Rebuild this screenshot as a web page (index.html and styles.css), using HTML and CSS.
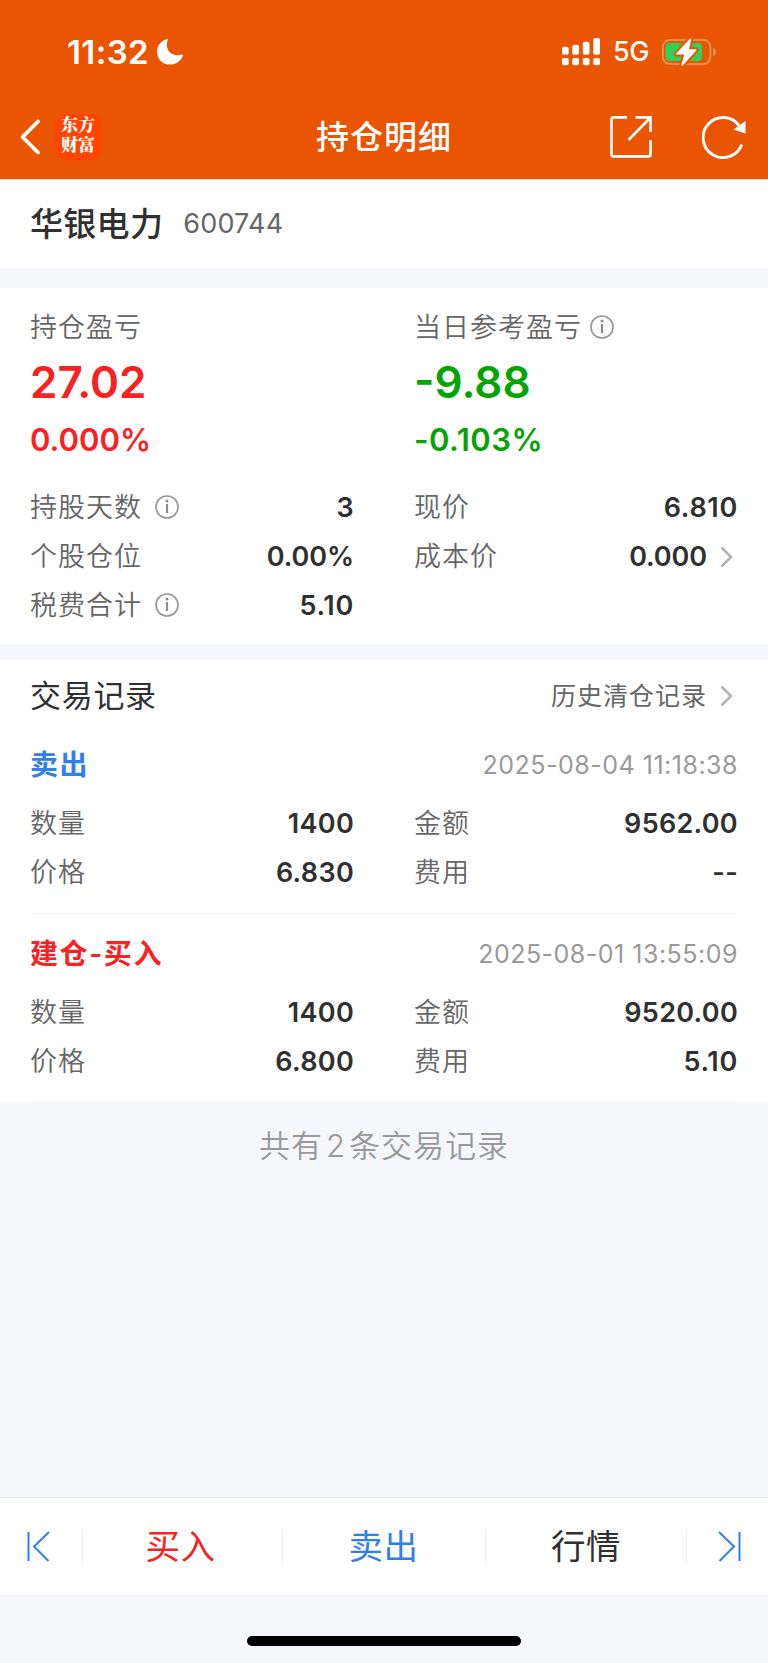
FILE: index.html
```html
<!DOCTYPE html>
<html lang="zh-CN">
<head>
<meta charset="utf-8">
<title>持仓明细</title>
<link rel="stylesheet" href="styles.css">
</head>
<body>
<svg class="defs" width="0" height="0" aria-hidden="true">
  <symbol id="info" viewBox="0 0 24 24"><circle cx="12" cy="12" r="11" fill="none" stroke="#999" stroke-width="1.700"/><circle cx="12" cy="6" r="1.500" fill="#8c8c8c"/><path d="M12 9v9" stroke="#8c8c8c" stroke-width="2.200"/></symbol>
  <symbol id="chevron" viewBox="0 0 13 22"><path d="M1.500 1.500 11 11l-9.500 9.500" fill="none" stroke="#b3b3b3" stroke-width="2.600"/></symbol>
</svg>
<div class="screen">
  <header class="top">
    <div class="status">
      <span class="time">11:32</span>
      <svg class="moon" width="26" height="26" viewBox="0 0 26 26"><path d="M10.300 0C4.500 1.300 0 6.500 0 12.700c0 7.200 5.600 12.900 12.800 12.900 6.200 0 11.300-3.800 13.100-9.200.2-.7-.4-1.200-1.100-.9-1.100.4-2.600.7-4 .7C14 16.200 9.800 12 9.800 5.600c0-1.700.4-3.300 1.100-4.500C11.300.4 11 0 10.300 0Z" fill="#fff"/></svg>
      <svg class="signal" width="39" height="28" viewBox="0 0 39 28" fill="#fff"><rect x="0" y="8.700" width="6.700" height="8" rx="2"/><rect x="10.300" y="6.700" width="6.700" height="10" rx="2"/><rect x="20.800" y="3.700" width="6.700" height="13" rx="2"/><rect x="31.300" y="0" width="6.700" height="16.700" rx="2"/><rect x="0" y="20" width="6.700" height="7.200" rx="2"/><rect x="10.300" y="20" width="6.700" height="7.200" rx="2"/><rect x="20.800" y="20" width="6.700" height="7.200" rx="2"/><rect x="31.300" y="20" width="6.700" height="7.200" rx="2"/></svg>
      <span class="net">5G</span>
      <svg class="battery" width="54" height="28" viewBox="0 0 54 28"><rect x=".9" y="2" width="47.500" height="24" rx="7" fill="none" stroke="#f5a06c" stroke-width="1.500"/><path d="M51.500 10c2.700 1 2.700 7 0 8Z" fill="#f5a06c"/><rect x="3.500" y="5" width="36.500" height="18" rx="4" fill="#30d158"/><path d="M27.800.8 14.200 15.500q-.8 1.100.6 1.100h7.500L19.400 27q0 1.300 1.300.4l13.600-14.900q.6-1.200-.8-1.200h-6.500L29.200 1.400q0-1.300-1.400-.6Z" fill="#fff" stroke="#ea5504" stroke-width="4" paint-order="stroke"/></svg>
    </div>
    <div class="bar">
      <svg class="back" width="20" height="36" viewBox="0 0 20 36"><path d="M18 2.500 2.500 18 18 33.500" fill="none" stroke="#fff" stroke-width="3.700" stroke-linecap="round" stroke-linejoin="round"/></svg>
      <div class="logo"><span>东方</span><span>财富</span></div>
      <h1 class="title">持仓明细</h1>
      <svg class="share" width="42" height="42" viewBox="0 0 42 42" fill="none" stroke="#fff" stroke-width="2.600"><path d="M17 1.400H3.500q-2 0-2 2v35q0 2 2 2h35q2 0 2-2V24M25.500 1.400h15V16M40 2 18.500 24"/></svg>
      <svg class="refresh" width="44" height="44" viewBox="0 0 44 44"><path d="M39.800 29.500A20 20 0 1 1 37 10.500" fill="none" stroke="#fff" stroke-width="3"/><path d="M43.500 6v12.500L31.500 14.500Z" fill="#fff"/></svg>
    </div>
  </header>

  <section class="stock"><strong>华银电力</strong><span>600744</span></section>

  <section class="summary">
    <div class="columns totals">
      <div class="total up"><div class="label">持仓盈亏</div><div class="amount">27.02</div><div class="percent">0.000%</div></div>
      <div class="total down"><div class="label">当日参考盈亏<svg class="info near"><use href="#info"/></svg></div><div class="amount">-9.88</div><div class="percent">-0.103%</div></div>
    </div>
    <div class="columns">
      <div class="row"><span class="label">持股天数<svg class="info"><use href="#info"/></svg></span><b>3</b></div>
      <div class="row"><span class="label">现价</span><b class="wide">6.810</b></div>
      <div class="row"><span class="label">个股仓位</span><b class="ratio">0.00%</b></div>
      <div class="row"><span class="label">成本价</span><b class="cost">0.000<svg class="chevron"><use href="#chevron"/></svg></b></div>
      <div class="row"><span class="label">税费合计<svg class="info"><use href="#info"/></svg></span><b class="wide">5.10</b></div>
    </div>
  </section>

  <section class="records">
    <div class="records-head"><h2>交易记录</h2><a class="history">历史清仓记录<svg class="chevron"><use href="#chevron"/></svg></a></div>
    <article class="record">
      <div class="record-head"><strong class="sell">卖出</strong><time>2025-08-04 11:18:38</time></div>
      <div class="columns">
        <div class="row"><span class="label">数量</span><b>1400</b></div>
        <div class="row"><span class="label">金额</span><b>9562.00</b></div>
        <div class="row"><span class="label">价格</span><b>6.830</b></div>
        <div class="row"><span class="label">费用</span><b>--</b></div>
      </div>
    </article>
    <article class="record">
      <div class="record-head"><strong class="buy">建仓-买入</strong><time>2025-08-01 13:55:09</time></div>
      <div class="columns">
        <div class="row"><span class="label">数量</span><b>1400</b></div>
        <div class="row"><span class="label">金额</span><b>9520.00</b></div>
        <div class="row"><span class="label">价格</span><b>6.800</b></div>
        <div class="row"><span class="label">费用</span><b class="wide">5.10</b></div>
      </div>
    </article>
  </section>

  <p class="count">共有<span>2</span>条交易记录</p>

  <nav class="actions">
    <a class="edge"><svg width="23" height="31" viewBox="0 0 23 31" fill="none" stroke="#2f80e8" stroke-width="2"><path d="M1.500 1v29M22 1 7 15.500 21.500 30"/></svg></a>
    <a class="buy">买入</a>
    <a class="sell">卖出</a>
    <a class="quote">行情</a>
    <a class="edge last"><svg width="23" height="31" viewBox="0 0 23 31" fill="none" stroke="#2f80e8" stroke-width="2"><path d="M21.500 1v29M1 1l15 14.500L1.500 30"/></svg></a>
  </nav>
  <footer class="home"><i></i></footer>
</div>
</body>
</html>
```
FILE: styles.css
```css
* { box-sizing: border-box; }
body { margin: 0; background: #f6f7fa; color: #303030; font-family: Inter, "Noto Sans CJK SC", sans-serif; }
.defs { display: block; }
svg { flex: none; }
h1, h2, p { margin: 0; }
.screen { display: flex; flex-direction: column; height: 1663px; }
.top { height: 180px; background: #ea5504; color: #fff; border-bottom: 1px solid #fbd9c8; }
.status { display: flex; align-items: center; height: 102px; padding: 1px 52px 0 67px; }
.time { width: 90px; font-size: 33px; font-weight: 600; line-height: 40px; white-space: nowrap; letter-spacing: 0.400px; }
.signal { margin-left: auto; }
.net { width: 49px; margin-left: 12px; padding-top: 1px; font-size: 27px; font-weight: 500; line-height: 34px; letter-spacing: -0.500px; }
.bar { display: flex; align-items: center; height: 69px; padding: 0 22px 0 20px; }
.logo { display: flex; flex-direction: column; align-items: center; justify-content: center; width: 46px; height: 46px; margin-left: 15px; padding-bottom: 2px; border-radius: 10px; background: #ff4500; }
.logo span { font-family: Inter, "Noto Serif CJK SC", "Noto Sans CJK SC", sans-serif; font-size: 17px; font-weight: 900; line-height: 19.500px; }
.title { flex: 1; padding-left: 215px; font-size: 33px; font-weight: 500; line-height: 44px; letter-spacing: 1px; }
.share { margin-right: 50px; }
.stock { display: flex; align-items: center; height: 88px; padding: 0 30px; }
.stock, .summary, .records { background: #fff; }
.stock strong { font-size: 33px; font-weight: 500; line-height: 44px; letter-spacing: 0.300px; }
.stock span { margin-left: 20px; color: #666; font-size: 27px; line-height: 40px; letter-spacing: 0.200px; }
.summary { height: 356px; margin-top: 20px; padding: 17px 30px 0; }
.columns { display: grid; grid-template-columns: 324px 324px; column-gap: 60px; }
.totals { height: 178px; }
.label { display: flex; align-items: center; color: #666; font-size: 27px; font-weight: 350; line-height: 46px; letter-spacing: 1px; }
.info { width: 24px; height: 24px; margin: 0 0 2px 13px; }
.info.near { margin-left: 8px; }
.amount { font-size: 44px; font-weight: 600; line-height: 62px; }
.percent { font-size: 31px; font-weight: 600; line-height: 53px; }
.down .percent { letter-spacing: 0.500px; }
.up { color: #f82222; }
.down { color: #04a404; }
.row { display: flex; align-items: center; justify-content: space-between; height: 49px; }
.row b { display: flex; align-items: center; font-size: 27px; font-weight: 600; line-height: 40px; letter-spacing: 0.300px; }
.row .ratio { letter-spacing: -0.100px; }
.row .wide { letter-spacing: 0.700px; }
.row .cost { letter-spacing: -0.100px; }
.chevron { width: 13px; height: 22px; margin: 0 5px 0 13px; }
.records { height: 442px; margin-top: 16px; padding: 0 30px; }
.records-head, .record-head { display: flex; align-items: center; justify-content: space-between; }
.records-head { height: 72px; }
h2 { font-size: 31px; font-weight: 400; line-height: 44px; letter-spacing: 0.700px; }
.history { display: flex; align-items: center; color: #666; font-size: 25px; line-height: 40px; letter-spacing: 1px; }
.record { height: 182px; border-bottom: 1px solid #f6f7f8; }
.record + .record { height: 188px; }
.record-head { height: 67px; padding-bottom: 1px; }
.record + .record .record-head { height: 74px; padding: 6px 0 0; }
.record-head strong { font-size: 28px; font-weight: 600; line-height: 40px; letter-spacing: 1.600px; }
.record-head time { color: #999; font-size: 25px; line-height: 36px; letter-spacing: 0.500px; }
.sell { color: #2f80e8; }
.buy { color: #f82222; }
.count { padding-top: 22px; color: #999; font-size: 31px; font-weight: 350; line-height: 44px; letter-spacing: 1px; text-align: center; }
.count span { margin: 0 3px; }
.actions { display: grid; grid-template-columns: 83px 200px 203px 201px 81px; align-items: center; height: 98px; margin-top: auto; border-top: 1px solid #ededf0; background: #fff; }
.actions a { display: flex; align-items: center; justify-content: center; height: 33px; font-size: 34.500px; line-height: 33px; letter-spacing: 0.500px; border-right: 1px solid #eee; }
.actions .edge { padding-right: 6px; }
.actions .last { padding: 0 0 0 4px; border: 0; }
.actions .buy { padding-right: 4px; }
.actions .sell { padding-right: 1px; }
.actions .quote { color: #303030; }
.home { display: flex; justify-content: center; height: 68px; padding-top: 41px; }
.home i { width: 274px; height: 10px; border-radius: 5px; background: #000; }
```
